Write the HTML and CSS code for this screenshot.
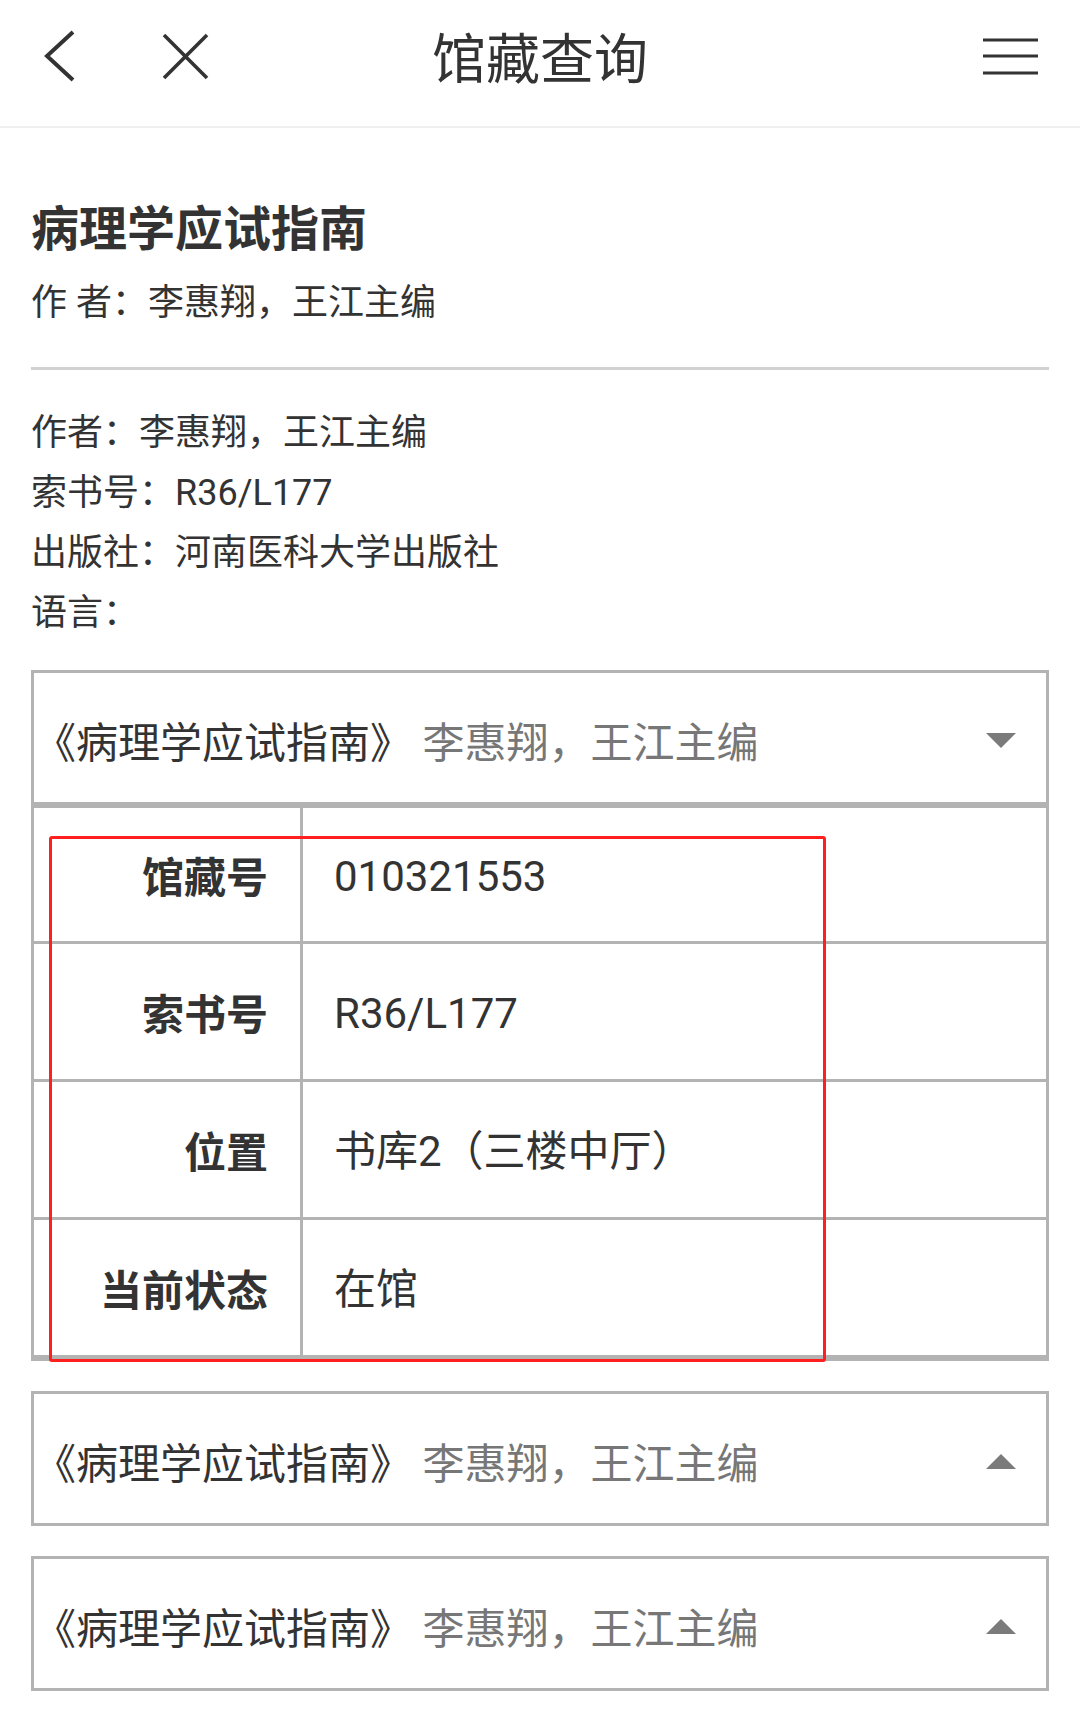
FILE: index.html
```html
<!DOCTYPE html>
<html lang="zh-CN">
<head>
<meta charset="utf-8">
<title>馆藏查询</title>
<link rel="stylesheet" href="styles.css">
</head>
<body>
<header class="topbar">
  <div class="topbar-left">
    <svg class="icon-back" width="40" height="56" viewBox="0 0 40 56"><path d="M33 4 L7 28 L33 52" fill="none" stroke="#333" stroke-width="4" stroke-linecap="butt" stroke-linejoin="miter"/></svg>
    <svg class="icon-close" width="56" height="56" viewBox="0 0 56 56"><path d="M6 7 L49 50 M49 7 L6 50" fill="none" stroke="#333" stroke-width="3.6"/></svg>
  </div>
  <h1 class="topbar-title">馆藏查询</h1>
  <div class="topbar-right">
    <svg class="icon-menu" width="60" height="56" viewBox="0 0 60 56"><path d="M3 12 H58 M3 28 H58 M3 45 H58" fill="none" stroke="#333" stroke-width="3"/></svg>
  </div>
</header>

<main class="content">
  <h2 class="book-title">病理学应试指南</h2>
  <p class="book-sub">作 者：李惠翔，王江主编</p>
  <hr class="divider">
  <ul class="info">
    <li>作者：李惠翔，王江主编</li>
    <li>索书号：R36/L177</li>
    <li>出版社：河南医科大学出版社</li>
    <li>语言：</li>
  </ul>

  <section class="holding">
    <div class="acc-head">
      <span class="acc-text"><span class="acc-name">《病理学应试指南》</span> <span class="acc-author">李惠翔，王江主编</span></span>
      <span class="tri tri-down"></span>
    </div>
    <div class="acc-body">
      <div class="row"><div class="cell-label">馆藏号</div><div class="cell-value">010321553</div></div>
      <div class="row"><div class="cell-label">索书号</div><div class="cell-value">R36/L177</div></div>
      <div class="row"><div class="cell-label">位置</div><div class="cell-value">书库2（三楼中厅）</div></div>
      <div class="row"><div class="cell-label">当前状态</div><div class="cell-value">在馆</div></div>
      <div class="highlight"></div>
    </div>
  </section>

  <section class="holding">
    <div class="acc-head">
      <span class="acc-text"><span class="acc-name">《病理学应试指南》</span> <span class="acc-author">李惠翔，王江主编</span></span>
      <span class="tri tri-up"></span>
    </div>
  </section>

  <section class="holding">
    <div class="acc-head">
      <span class="acc-text"><span class="acc-name">《病理学应试指南》</span> <span class="acc-author">李惠翔，王江主编</span></span>
      <span class="tri tri-up"></span>
    </div>
  </section>
</main>
</body>
</html>
```

FILE: styles.css
```css
* { box-sizing: border-box; }

html, body {
  margin: 0;
  padding: 0;
  background: #fff;
}

body {
  width: 1080px;
  font-family: Roboto, "Noto Sans CJK SC", "Noto Sans", sans-serif;
  color: #333;
}

.topbar {
  display: grid;
  grid-template-columns: 1fr auto 1fr;
  align-items: center;
  height: 128px;
  padding: 0 40px 14px 40px;
  border-bottom: 2px solid #efefef;
}

.topbar-left {
  display: flex;
  align-items: center;
  gap: 78px;
}

.topbar-left svg,
.topbar-right svg {
  display: block;
}

.topbar-right {
  display: flex;
  justify-content: flex-end;
}

.topbar-title {
  margin: 0;
  font-family: "Noto Sans CJK SC", sans-serif;
  font-size: 54px;
  font-weight: 400;
  line-height: 1;
  color: #333;
}

.content {
  padding: 0 31px 0 31px;
}

.book-title {
  margin: 73px 0 0 0;
  font-family: "Noto Sans CJK SC", sans-serif;
  font-size: 48px;
  font-weight: 700;
  line-height: 48px;
  color: #333;
}

.book-sub {
  margin: 36px 0 0 0;
  font-size: 36px;
  line-height: 36px;
  color: #333;
}

.divider {
  margin: 46px 0 0 0;
  border: 0;
  height: 3px;
  background: #d2d2d2;
}

.info {
  list-style: none;
  margin: 33px 0 0 0;
  padding: 0;
}

.info li {
  font-size: 36px;
  line-height: 60px;
  height: 60px;
  color: #333;
}

.info li:last-child {
  height: 57px;
}

.holding {
  margin-top: 30px;
}

.acc-head {
  display: flex;
  align-items: center;
  justify-content: space-between;
  height: 135px;
  padding: 12px 30px 0 0;
  border: 3px solid #b3b3b3;
}

.acc-text {
  font-size: 42px;
  line-height: 42px;
  white-space: pre;
}

.acc-name {
  color: #333;
}

.acc-author {
  color: #777;
}

.tri {
  width: 0;
  height: 0;
  margin-top: -6px;
  border-left: 15px solid transparent;
  border-right: 15px solid transparent;
}

.tri-down {
  border-top: 15px solid #7b7b7b;
}

.tri-up {
  border-bottom: 15px solid #7b7b7b;
}

.acc-body {
  position: relative;
  border: 3px solid #b3b3b3;
  border-top: 3px solid #b3b3b3;
}

.row {
  display: flex;
  height: 138px;
  border-bottom: 3px solid #b3b3b3;
}

.row:first-child {
  height: 136px;
}

.row:last-of-type {
  height: 135px;
  border-bottom: 0;
}

.cell-label {
  width: 269px;
  flex: none;
  display: flex;
  align-items: center;
  justify-content: flex-end;
  padding-right: 32px;
  border-right: 3px solid #b3b3b3;
  font-family: "Noto Sans CJK SC", sans-serif;
  font-size: 42px;
  font-weight: 700;
  line-height: 42px;
  color: #333;
}

.cell-value {
  flex: 1;
  display: flex;
  align-items: center;
  padding-left: 31px;
  padding-top: 4px;
  font-size: 42px;
  line-height: 42px;
  color: #333;
}

.highlight {
  position: absolute;
  left: 15px;
  top: 28px;
  width: 777px;
  height: 526px;
  border: 3px solid #ff1f1f;
  border-radius: 3px;
  pointer-events: none;
}
```
